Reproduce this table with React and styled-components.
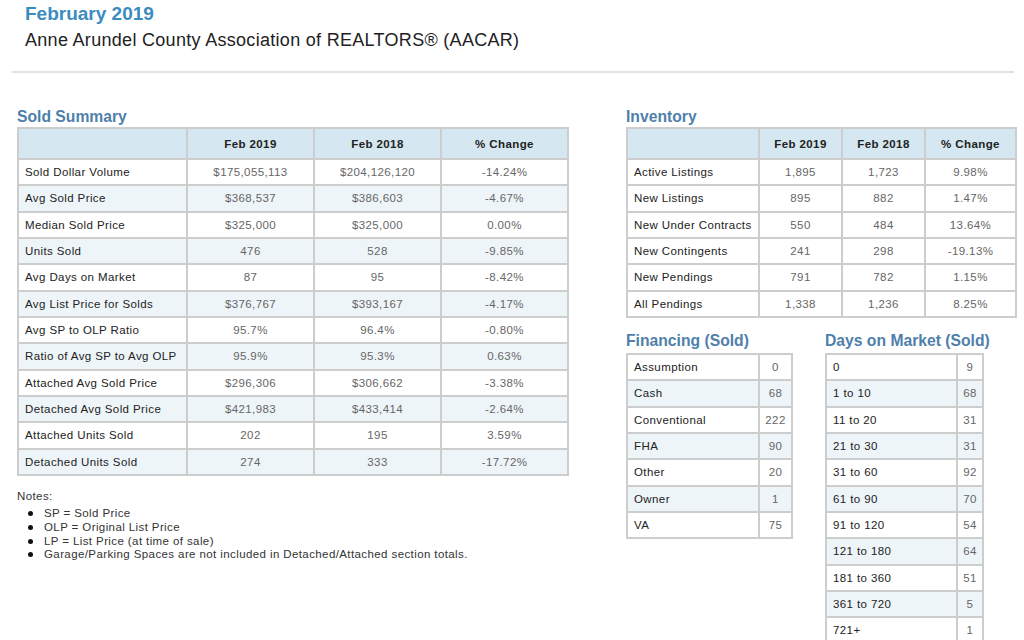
import React from "react";
import styled, { createGlobalStyle } from "styled-components";

const Global = createGlobalStyle`
  html, body { margin: 0; padding: 0; background: #fff; }
  body { font-family: "Liberation Sans", Arial, Helvetica, sans-serif; color: #222; }
`;

const Page = styled.div`
  width: 1024px;
  height: 640px;
  overflow: hidden;
  padding: 0 10px 0 12px;
  box-sizing: border-box;
`;

const Header = styled.header`
  padding: 3px 0 0 13px;
`;

const Title = styled.h1`
  margin: 0;
  font-size: 19px;
  line-height: 22px;
  font-weight: bold;
  color: #3b8bbf;
`;

const Subtitle = styled.div`
  margin-top: 4px;
  font-size: 18px;
  line-height: 22px;
  letter-spacing: 0.3px;
  color: #222;
`;

const Divider = styled.hr`
  margin: 20px 0 0 0;
  border: 0;
  border-top: 2px solid #e2e2e2;
`;

const Main = styled.main`
  display: flex;
  gap: 58px;
  margin-top: 30px;
  padding-left: 5px;
  align-items: flex-start;
`;

const Column = styled.section`
  width: ${(p) => p.$w}px;
  flex: none;
`;

const SectionTitle = styled.h2`
  margin: 0;
  height: 24px;
  box-sizing: border-box;
  padding-top: ${(p) => (p.$low ? 5 : 3)}px;
  font-size: 15.7px;
  line-height: 18px;
  font-weight: bold;
  color: #4f7fab;
  white-space: nowrap;
`;

const Table = styled.table`
  width: 100%;
  border-collapse: collapse;
  table-layout: fixed;
  border: 2px solid #cdcdcd;
  font-size: 11.5px;
  letter-spacing: 0.4px;
`;

const HeadCell = styled.th`
  background: #d5e7f0;
  border: 2px solid #cdcdcd;
  height: 31px;
  box-sizing: border-box;
  font-weight: bold;
  color: #222;
  text-align: center;
  padding: 0;
`;

const Row = styled.tr`
  background: ${(p) => (p.$alt ? "#eef5f9" : "#ffffff")};
`;

const Label = styled.td`
  border: 2px solid #cdcdcd;
  height: 26.33px;
  box-sizing: border-box;
  padding: 0 0 0 6px;
  color: #222;
  white-space: nowrap;
`;

const Value = styled.td`
  border: 2px solid #cdcdcd;
  height: 26.33px;
  box-sizing: border-box;
  padding: 0;
  text-align: center;
  color: #666;
`;

const Notes = styled.div`
  margin-top: 13px;
  font-size: 11.5px;
  letter-spacing: 0.4px;
  line-height: 14px;
  color: #333;
`;

const NoteList = styled.ul`
  margin: 4px 0 0 0;
  padding-left: 27px;
  list-style: none;
`;

const NoteItem = styled.li`
  position: relative;
  line-height: 13.8px;
  &::before {
    content: "";
    position: absolute;
    left: -16px;
    top: 4px;
    width: 5px;
    height: 5px;
    border-radius: 50%;
    background: #111;
  }
`;

const BottomRow = styled.div`
  display: flex;
  gap: 34px;
  margin-top: 11px;
  align-items: flex-start;
`;

const SubColumn = styled.div`
  width: ${(p) => p.$w}px;
  flex: none;
`;

const sold = [
  ["Sold Dollar Volume", "$175,055,113", "$204,126,120", "-14.24%"],
  ["Avg Sold Price", "$368,537", "$386,603", "-4.67%"],
  ["Median Sold Price", "$325,000", "$325,000", "0.00%"],
  ["Units Sold", "476", "528", "-9.85%"],
  ["Avg Days on Market", "87", "95", "-8.42%"],
  ["Avg List Price for Solds", "$376,767", "$393,167", "-4.17%"],
  ["Avg SP to OLP Ratio", "95.7%", "96.4%", "-0.80%"],
  ["Ratio of Avg SP to Avg OLP", "95.9%", "95.3%", "0.63%"],
  ["Attached Avg Sold Price", "$296,306", "$306,662", "-3.38%"],
  ["Detached Avg Sold Price", "$421,983", "$433,414", "-2.64%"],
  ["Attached Units Sold", "202", "195", "3.59%"],
  ["Detached Units Sold", "274", "333", "-17.72%"],
];

const inventory = [
  ["Active Listings", "1,895", "1,723", "9.98%"],
  ["New Listings", "895", "882", "1.47%"],
  ["New Under Contracts", "550", "484", "13.64%"],
  ["New Contingents", "241", "298", "-19.13%"],
  ["New Pendings", "791", "782", "1.15%"],
  ["All Pendings", "1,338", "1,236", "8.25%"],
];

const financing = [
  ["Assumption", "0"],
  ["Cash", "68"],
  ["Conventional", "222"],
  ["FHA", "90"],
  ["Other", "20"],
  ["Owner", "1"],
  ["VA", "75"],
];

const dom = [
  ["0", "9"],
  ["1 to 10", "68"],
  ["11 to 20", "31"],
  ["21 to 30", "31"],
  ["31 to 60", "92"],
  ["61 to 90", "70"],
  ["91 to 120", "54"],
  ["121 to 180", "64"],
  ["181 to 360", "51"],
  ["361 to 720", "5"],
  ["721+", "1"],
];

const notes = [
  "SP = Sold Price",
  "OLP = Original List Price",
  "LP = List Price (at time of sale)",
  "Garage/Parking Spaces are not included in Detached/Attached section totals.",
];

function CompareTable({ rows, widths, striped }) {
  return (
    <Table>
      <colgroup>
        {widths.map((w, i) => (
          <col key={i} style={{ width: w }} />
        ))}
      </colgroup>
      <thead>
        <tr>
          <HeadCell />
          <HeadCell>Feb 2019</HeadCell>
          <HeadCell>Feb 2018</HeadCell>
          <HeadCell>% Change</HeadCell>
        </tr>
      </thead>
      <tbody>
        {rows.map((r, i) => (
          <Row key={r[0]} $alt={striped && i % 2 === 1}>
            <Label>{r[0]}</Label>
            <Value>{r[1]}</Value>
            <Value>{r[2]}</Value>
            <Value>{r[3]}</Value>
          </Row>
        ))}
      </tbody>
    </Table>
  );
}

function PairTable({ rows, widths }) {
  return (
    <Table>
      <colgroup>
        {widths.map((w, i) => (
          <col key={i} style={{ width: w }} />
        ))}
      </colgroup>
      <tbody>
        {rows.map((r, i) => (
          <Row key={r[0]} $alt={i % 2 === 1}>
            <Label>{r[0]}</Label>
            <Value>{r[1]}</Value>
          </Row>
        ))}
      </tbody>
    </Table>
  );
}

export default function App() {
  return (
    <Page>
      <Global />
      <Header>
        <Title>February 2019</Title>
        <Subtitle>Anne Arundel County Association of REALTORS® (AACAR)</Subtitle>
      </Header>
      <Divider />
      <Main>
        <Column $w={551}>
          <SectionTitle $low>Sold Summary</SectionTitle>
          <CompareTable rows={sold} widths={[169, 127, 127, 127]} striped />
          <Notes>
            Notes:
            <NoteList>
              {notes.map((n) => (
                <NoteItem key={n}>{n}</NoteItem>
              ))}
            </NoteList>
          </Notes>
        </Column>
        <Column $w={390}>
          <SectionTitle $low>Inventory</SectionTitle>
          <CompareTable rows={inventory} widths={[132, 83, 83, 91]} />
          <BottomRow>
            <SubColumn $w={165}>
              <SectionTitle>Financing (Sold)</SectionTitle>
              <PairTable rows={financing} widths={[132, 33]} />
            </SubColumn>
            <SubColumn $w={157}>
              <SectionTitle>Days on Market (Sold)</SectionTitle>
              <PairTable rows={dom} widths={[131, 26]} />
            </SubColumn>
          </BottomRow>
        </Column>
      </Main>
    </Page>
  );
}
